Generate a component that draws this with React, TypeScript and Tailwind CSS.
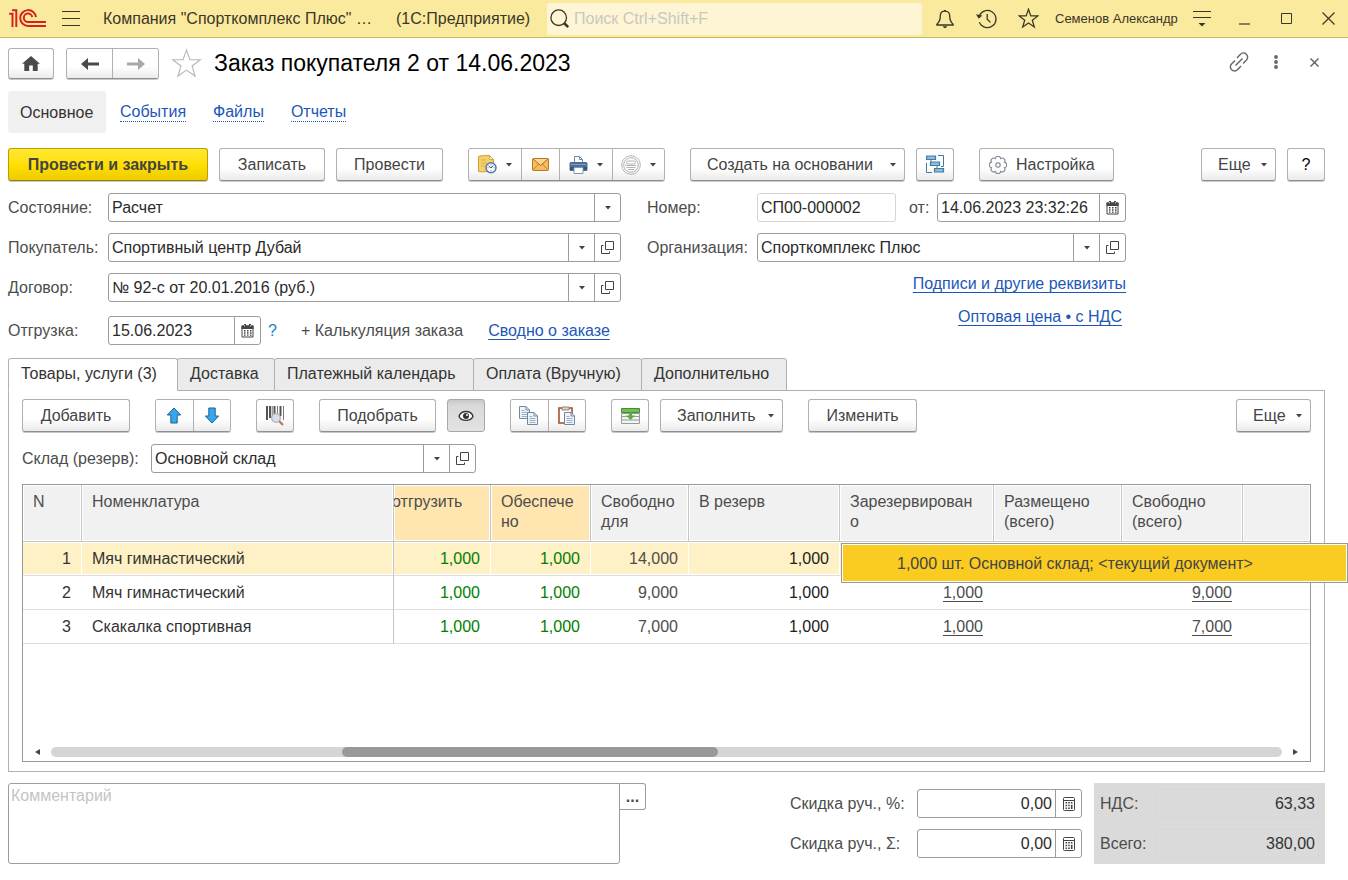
import React from 'react';

/* ─────────────────────────────────────────────
   Small glyphs shared by fields and buttons
───────────────────────────────────────────── */
const Caret: React.FC = () => (
  <svg width="6" height="4" viewBox="0 0 6 4" className="shrink-0" aria-hidden="true">
    <path d="M0 0h6L3 3.6z" fill="#444" />
  </svg>
);

const OpenIcon: React.FC = () => (
  <svg width="13" height="13" viewBox="0 0 13 13" fill="none" stroke="#444" aria-hidden="true">
    <path d="M4.5 .5h8v8h-8z" />
    <path d="M2.5 4.5h-2v8h8v-2" />
  </svg>
);

const CalendarIcon: React.FC = () => (
  <svg width="13" height="14" viewBox="0 0 13 14" aria-hidden="true">
    <path d="M1 2h11v11H1z" fill="#fff" stroke="#444" />
    <path d="M.5 1.5h12V5H.5z" fill="#444" />
    <path d="M3 0h2v3H3zM8 0h2v3H8z" fill="#444" />
    <path d="M3.5 1v1.500M9.500 1v1.500" stroke="#fff" strokeWidth=".6" />
    <path
      d="M3 6h1.500v1.500H3zM6 6h1.500v1.500H6zM9 6h1.500v1.500H9zM3 8.300h1.500v1.500H3zM6 8.300h1.500v1.500H6zM9 8.300h1.500v1.500H9zM3 10.600h1.500v1.200H3zM6 10.600h1.500v1.200H6zM9 10.600h1.500v1.200H9z"
      fill="#444"
    />
  </svg>
);

const CalcIcon: React.FC = () => (
  <svg width="12" height="14" viewBox="0 0 12 14" aria-hidden="true">
    <rect x=".5" y=".5" width="11" height="13" rx="1" fill="#fff" stroke="#444" />
    <path d="M1 3.500h10" stroke="#444" />
    <path
      d="M2.500 5h1.600v1.600H2.500zM5.200 5h1.600v1.600H5.200zM7.900 5h1.600v1.600H7.900zM2.500 7.700h1.600v1.600H2.500zM5.200 7.700h1.600v1.600H5.200zM7.900 7.700h1.600v4.300H7.900zM2.500 10.400h1.600V12H2.500zM5.200 10.400h1.600V12H5.200z"
      fill="#444"
    />
  </svg>
);

/* ─────────────────────────────────────────────
   Title bar icons
───────────────────────────────────────────── */
const Logo: React.FC = () => (
  <svg width="38" height="19" viewBox="0 0 38 19" fill="none" stroke="#d8201f" strokeWidth="2" aria-label="1С">
    <path d="M.2 4.800h3.300V18M3 1.300h4.300V18" />
    <path d="M27 8.200A7.900 7.900 0 1 0 19.300 16.900H37" />
    <path d="M23.200 8.200A4.200 4.200 0 1 0 19.300 12.900H37" />
  </svg>
);

const BellIcon: React.FC = () => (
  <svg width="18" height="20" viewBox="0 0 18 20" fill="none" stroke="#3a3728" strokeWidth="1.300" aria-hidden="true">
    <path d="M9 2.200c-3.200 0-4.700 2-4.700 4.800 0 4.200-1.300 6.500-3.400 8.300v.7h16.200v-.7c-2.100-1.800-3.400-4.100-3.400-8.300 0-2.800-1.500-4.800-4.700-4.800z" />
    <path d="M8 1.700h2" />
    <path d="M6.500 17.200h5L9.800 19H8.200z" fill="#3a3728" stroke="none" />
  </svg>
);

const HistoryIcon: React.FC = () => (
  <svg width="21" height="20" viewBox="0 0 21 20" fill="none" stroke="#3a3728" strokeWidth="1.300" aria-hidden="true">
    <path d="M3 8a8.600 8.600 0 1 1 .4 5.300" />
    <path d="M11.200 5v5.200l3.200 3.200" />
    <path d="M0 5.200l6.300 1.200-3.600 3.400z" fill="#3a3728" stroke="none" />
  </svg>
);

const StarShape: React.FC<{ size: number; color: string; width: number }> = ({ size, color, width }) => (
  <svg width={size} height={size} viewBox="0 0 30 30" fill="none" stroke={color} strokeWidth={width} aria-hidden="true">
    <path d="M15 1.800l3.300 9.400 10 .2-7.900 6 2.900 9.700L15 21.400l-8.300 5.700 2.900-9.700-7.900-6 10-.2z" />
  </svg>
);

/* ─────────────────────────────────────────────
   Command icons
───────────────────────────────────────────── */
const DocClockIcon: React.FC = () => (
  <svg width="19" height="19" viewBox="0 0 19 19" aria-hidden="true">
    <path d="M.5 1.500C3 .2 8 .8 11.500.500L15.500 4.500V16.500C10 16 5 17.500.5 16.500z" fill="#f4d26b" stroke="#cf9f34" />
    <path d="M11.500.5v4h4z" fill="#fdf0bd" stroke="#cf9f34" strokeWidth=".8" />
    <path d="M3 5h5M3 8h6M3 11h4" stroke="#dcb148" />
    <circle cx="13" cy="12.800" r="5" fill="#fff" stroke="#4a7ab0" strokeWidth="1.500" />
    <path d="M13 9.300v1M13 15.300v1M9.500 12.800h1M15.500 12.800h1" stroke="#4a7ab0" />
    <path d="M13 13l-2.500-2.200" stroke="#c33" />
    <path d="M13 13l2.200-2.500" stroke="#345" />
  </svg>
);

const MailIcon: React.FC = () => (
  <svg width="17" height="13" viewBox="0 0 17 13" aria-hidden="true">
    <rect x=".5" y=".5" width="16" height="12" rx="1" fill="#f6bd5c" stroke="#b9772a" />
    <path d="M1 12l5.500-6M16 12l-5.500-6" stroke="#c5832e" fill="none" />
    <path d="M1 1l7.500 6.500L16 1" fill="#fbd68e" stroke="#a5661d" />
  </svg>
);

const PrinterIcon: React.FC = () => (
  <svg width="19" height="18" viewBox="0 0 19 18" aria-hidden="true">
    <path d="M5.500 8V.5h5l3 3V8z" fill="#fff" stroke="#6d87a8" />
    <path d="M10.500.5v3h3" fill="none" stroke="#6d87a8" />
    <rect x=".5" y="6" width="18" height="9" rx="1.500" fill="#4a709a" />
    <path d="M1 11h17v3H1z" fill="#34557c" />
    <path d="M2 8.500h15" stroke="#7fa0c6" />
    <path d="M5 11.500h9v6H5z" fill="#fff" stroke="#8797ab" />
  </svg>
);

const StampIcon: React.FC = () => (
  <svg width="20" height="20" viewBox="0 0 20 20" fill="none" stroke="#b3b3b3" aria-hidden="true">
    <circle cx="10" cy="10" r="9.300" />
    <circle cx="10" cy="10" r="7.300" />
    <rect x="5.500" y="6" width="9" height="3" rx="1.500" />
    <path d="M4.500 10.500h11M5.500 12.500h9M7 14.500h6" />
  </svg>
);

const TreeIcon: React.FC = () => (
  <svg width="19" height="19" viewBox="0 0 19 19" fill="#8fbcd9" stroke="#3f7ca5" aria-hidden="true">
    <path d="M.5 1h9v3.500h-9zM4.500 7h9v3.500h-9zM8.500 13.500h9V17h-9z" strokeWidth="1.200" />
    <path d="M12 .5h5.500v11H15M.5 8v9.500H6M5 4.500V7M11 10.500v3" fill="none" />
  </svg>
);

/* eight petals around the centre */
const GearIcon: React.FC = () => (
  <svg width="18" height="18" viewBox="0 0 18 18" fill="none" stroke="#7c8494" strokeWidth="1.100" aria-hidden="true">
    <path d="M6.300 2.500a2.750 2.750 0 0 1 5.400 0a2.750 2.750 0 0 1 3.800 3.800a2.750 2.750 0 0 1 0 5.400a2.750 2.750 0 0 1-3.800 3.800a2.750 2.750 0 0 1-5.400 0a2.750 2.750 0 0 1-3.800-3.800a2.750 2.750 0 0 1 0-5.400a2.750 2.750 0 0 1 3.800-3.800z" />
    <circle cx="9" cy="9" r="2.200" />
  </svg>
);

const BlueArrow: React.FC<{ down?: boolean }> = ({ down }) => (
  <svg width="16" height="17" viewBox="0 0 16 17" className={down ? 'rotate-180' : ''} aria-hidden="true">
    <path d="M8 1l6.700 7h-3.500v8H4.800V8H1.300z" fill="#3aa5ea" stroke="#17649c" strokeLinejoin="round" />
  </svg>
);

const BarcodeIcon: React.FC = () => (
  <svg width="19" height="20" viewBox="0 0 19 20" aria-hidden="true">
    <path d="M1 0v14M4 0v12M8.500 0v8M14.500 0v10" stroke="#555" strokeWidth="2" />
    <path d="M6.200 0v12M11.500 0v8M17.500 0v14" stroke="#777" />
    <path d="M13 15l4 4" stroke="#b08068" strokeWidth="2.400" />
    <circle cx="10" cy="12" r="4.300" fill="#cfe2f5" stroke="#c9a793" strokeWidth="1.300" />
  </svg>
);

const EyeIcon: React.FC = () => (
  <svg width="16" height="12" viewBox="0 0 16 12" aria-hidden="true">
    <path d="M1 6.200C3.500 0 12.500 0 15 6.200 12.500 11.800 3.500 11.800 1 6.200z" fill="#fff" stroke="#333" strokeWidth="1.400" />
    <circle cx="8" cy="6" r="3" fill="#333" />
    <circle cx="9" cy="5" r="1" fill="#fff" />
  </svg>
);

const SheetPath: React.FC<{ x: number; y: number }> = ({ x, y }) => (
  <g transform={`translate(${x} ${y})`}>
    <path d="M.5.5h6.500l3.500 3.500v8.500H.5z" fill="#eef4fa" stroke="#73879f" />
    <path d="M7 .5V4h3.500" fill="none" stroke="#73879f" />
    <path d="M2.500 4.500h3M2.500 6.500h6M2.500 8.500h6M2.500 10.500h6" stroke="#9db0c5" />
  </g>
);

const CopyIcon: React.FC = () => (
  <svg width="20" height="20" viewBox="0 0 20 20" aria-hidden="true">
    <SheetPath x={0} y={0} />
    <SheetPath x={8} y={6} />
  </svg>
);

const PasteIcon: React.FC = () => (
  <svg width="18" height="20" viewBox="0 0 18 20" aria-hidden="true">
    <rect x="1" y="2" width="13" height="15" fill="#fff" stroke="#a5552b" strokeWidth="1.600" />
    <path d="M4 1h7v3H4z" fill="#d9d4cf" stroke="#94877b" />
    <SheetPath x={6} y={6} />
  </svg>
);

const FillRowsIcon: React.FC = () => (
  <svg width="19" height="16" viewBox="0 0 19 16" aria-hidden="true">
    <path d="M.5 5.500h18v10H.5z" fill="#f3f3f3" stroke="#999" />
    <path d="M1 8.500h17M1 12h17" stroke="#999" />
    <path d="M.5.500h18v4H.5z" fill="#72bd58" stroke="#428d30" />
    <path d="M8 4.500h3v3h3l-4.500 4.500L5 7.500h3z" fill="#59ad41" />
  </svg>
);

/* ─────────────────────────────────────────────
   Buttons
───────────────────────────────────────────── */
interface BtnProps {
  children: React.ReactNode;
  label?: string;
  className?: string;
}

const FACE =
  'flex items-center justify-center whitespace-nowrap bg-linear-to-b from-white from-60% to-[#ebebeb] text-[#444]';
const FRAME = 'rounded-[3px] border border-[#b0b0b0] border-b-[#8f8f8f] shadow-[0_1px_0_#c8c8c8]';

const Btn: React.FC<BtnProps> = ({ children, label, className = '' }) => (
  <button type="button" aria-label={label} className={`h-[33px] shrink-0 gap-[9px] ${FACE} ${FRAME} ${className}`}>
    {children}
  </button>
);

/* text button with a drop-down caret at its right edge */
const MenuBtn: React.FC<BtnProps> = ({ children, className = '' }) => (
  <Btn className={`pr-2 pl-4 ${className}`}>
    <span className="flex-1 text-left">{children}</span>
    <Caret />
  </Btn>
);

/* several buttons that share one frame */
const BtnGroup: React.FC<{ children: React.ReactNode; className?: string }> = ({ children, className = '' }) => (
  <div className={`flex shrink-0 overflow-hidden divide-x divide-[#b0b0b0] ${FRAME} ${className}`}>{children}</div>
);

const GroupBtn: React.FC<BtnProps> = ({ children, label, className = '' }) => (
  <button type="button" aria-label={label} className={`gap-[9px] ${FACE} ${className}`}>
    {children}
  </button>
);

/* ─────────────────────────────────────────────
   Form fields
───────────────────────────────────────────── */
const BOX = 'flex h-[29px] min-w-0 rounded-[3px] border border-[#9c9c9c] bg-white text-[#2b2b2b]';
const SIDE = 'flex w-[26px] shrink-0 items-center justify-center border-l border-[#9c9c9c]';

interface FieldProps {
  id: string;
  value: string;
  open?: boolean;
  className?: string;
}

const SelectField: React.FC<FieldProps> = ({ id, value, open, className = 'flex-1' }) => (
  <div className={`${BOX} ${className}`}>
    <div className="relative min-w-0 flex-1">
      <select id={id} className="h-full w-full appearance-none bg-transparent pr-8 pl-[3px] outline-none">
        <option>{value}</option>
      </select>
      <span className={`pointer-events-none absolute inset-y-0 right-0 ${SIDE}`}>
        <Caret />
      </span>
    </div>
    {open && (
      <button type="button" aria-label="Открыть" className={SIDE}>
        <OpenIcon />
      </button>
    )}
  </div>
);

interface PickFieldProps extends FieldProps {
  icon: React.ReactNode;
  hint: string;
  inputClass?: string;
}

const PickField: React.FC<PickFieldProps> = ({ id, value, icon, hint, className = '', inputClass = 'px-[3px]' }) => (
  <div className={`${BOX} ${className}`}>
    <input id={id} defaultValue={value} className={`min-w-0 flex-1 bg-transparent outline-none ${inputClass}`} />
    <button type="button" aria-label={hint} className={SIDE}>
      {icon}
    </button>
  </div>
);

const Label: React.FC<{ htmlFor: string; className?: string; children: React.ReactNode }> = ({
  htmlFor,
  className = 'w-[100px]',
  children,
}) => (
  <label htmlFor={htmlFor} className={`shrink-0 whitespace-nowrap ${className}`}>
    {children}
  </label>
);

const LINK = 'text-[#1c57b8] underline decoration-1 underline-offset-[3px]';

/* ─────────────────────────────────────────────
   Title bar
───────────────────────────────────────────── */
const TitleBar: React.FC = () => (
  <header className="flex h-[38px] items-center border-b border-[#c9b860] bg-[#faea9d] text-[#3a3728]">
    <div className="flex w-[547px] shrink-0 items-center pl-[9px] whitespace-nowrap">
      <Logo />
      <button type="button" aria-label="Главное меню" className="ml-[15px] flex w-[18px] flex-col gap-[6px]">
        <span className="h-px bg-[#3a3728]" />
        <span className="h-px bg-[#3a3728]" />
        <span className="h-px bg-[#3a3728]" />
      </button>
      <span className="ml-[23px] w-[293px]">Компания "Спорткомплекс Плюс" …</span>
      <span>(1С:Предприятие)</span>
    </div>
    <label className="flex h-8 min-w-0 flex-1 items-center gap-1 rounded-[2px] bg-[#fdf5d4] pl-[3px]">
      <svg width="20" height="20" viewBox="0 0 20 20" fill="none" stroke="#3a3728" aria-hidden="true">
        <circle cx="8.700" cy="8.700" r="7.800" strokeWidth="1.300" />
        <path d="M14 14l4.200 4.200" strokeWidth="2.600" />
      </svg>
      <input
        type="search"
        aria-label="Поиск"
        placeholder="Поиск Ctrl+Shift+F"
        className="min-w-0 flex-1 bg-transparent outline-none placeholder:text-[#c9c7c1]"
      />
    </label>
    <div className="flex w-[426px] shrink-0 items-center pl-[14px]">
      <button type="button" aria-label="Уведомления">
        <BellIcon />
      </button>
      <button type="button" aria-label="История" className="ml-[22px]">
        <HistoryIcon />
      </button>
      <button type="button" aria-label="Избранное" className="ml-[21px]">
        <StarShape size={21} color="#3a3728" width={1.8} />
      </button>
      <span className="ml-4 w-[138px] text-[13px] whitespace-nowrap">Семенов Александр</span>
      <button type="button" aria-label="Настройки панели">
        <svg width="18" height="17" viewBox="0 0 18 17" aria-hidden="true">
          <path d="M0 1.500h18M0 7.500h18" stroke="#3a3728" strokeWidth="1.200" />
          <path d="M5.500 13h7L9 16.500z" fill="#3a3728" />
        </svg>
      </button>
      <button type="button" aria-label="Свернуть" className="ml-7">
        <svg width="11" height="12" viewBox="0 0 11 12" aria-hidden="true">
          <path d="M0 11h11" stroke="#3a3728" strokeWidth="1.200" />
        </svg>
      </button>
      <button type="button" aria-label="Развернуть" className="ml-[31px]">
        <svg width="11" height="11" viewBox="0 0 11 11" aria-hidden="true">
          <path d="M.5.5h10v10H.5z" fill="none" stroke="#3a3728" />
        </svg>
      </button>
      <button type="button" aria-label="Закрыть программу" className="ml-[30px]">
        <svg width="13" height="13" viewBox="0 0 13 13" aria-hidden="true">
          <path d="M.5.5l12 12M12.500.500l-12 12" stroke="#3a3728" strokeWidth="1.200" />
        </svg>
      </button>
    </div>
  </header>
);

/* ─────────────────────────────────────────────
   Document heading with navigation
───────────────────────────────────────────── */
const NavArrow: React.FC<{ color: string; flip?: boolean }> = ({ color, flip }) => (
  <svg width="18" height="12" viewBox="0 0 18 12" className={flip ? 'rotate-180' : ''} aria-hidden="true">
    <path d="M0 6l7-6v4.500h11v3H7V12z" fill={color} />
  </svg>
);

const Heading: React.FC = () => (
  <div className="flex items-center pt-[10px]">
    <button type="button" aria-label="Домой" className={`h-[31px] w-[46px] shrink-0 ${FACE} ${FRAME}`}>
      <svg width="18" height="15" viewBox="0 0 18 15" fill="#4a4a4a" aria-hidden="true">
        <path d="M9 0l9 7.800h-2.300V15h-4.900V9.500H7.200V15H2.300V7.800H0z" />
      </svg>
    </button>
    <BtnGroup className="ml-3 h-[31px] w-[93px]">
      <GroupBtn label="Назад" className="flex-1">
        <NavArrow color="#4a4a4a" />
      </GroupBtn>
      <GroupBtn label="Вперед" className="flex-1">
        <NavArrow color="#a8a8a8" flip />
      </GroupBtn>
    </BtnGroup>
    <button type="button" aria-label="В избранное" className="ml-3">
      <StarShape size={31} color="#b4b8bc" width={1.1} />
    </button>
    <h1 className="ml-3 flex-1 pb-[2px] text-[23px] leading-7 text-black">Заказ покупателя 2 от 14.06.2023</h1>
    <div className="flex items-center pr-[6px] pb-[3px]">
      <button type="button" aria-label="Получить ссылку">
        <svg width="20" height="20" viewBox="0 0 20 20" fill="none" stroke="#666" strokeWidth="1.400" aria-hidden="true">
          <path d="M8 6l3.500-3.700a4.100 4.100 0 0 1 6 5.700L14 11.500M12 14l-3.500 3.700a4.100 4.100 0 0 1-6-5.700L6 8.500" />
          <path d="M6.500 13.500l7-7" />
        </svg>
      </button>
      <button type="button" aria-label="Дополнительные действия" className="ml-[25px]">
        <svg width="4" height="14" viewBox="0 0 4 14" fill="#666" aria-hidden="true">
          <circle cx="2" cy="2" r="1.900" />
          <circle cx="2" cy="7" r="1.900" />
          <circle cx="2" cy="12" r="1.900" />
        </svg>
      </button>
      <button type="button" aria-label="Закрыть" className="ml-8">
        <svg width="9" height="9" viewBox="0 0 9 9" stroke="#666" strokeWidth="1.500" aria-hidden="true">
          <path d="M.5.5l8 8M8.500.500l-8 8" />
        </svg>
      </button>
    </div>
  </div>
);

const SectionNav: React.FC = () => (
  <nav className="mt-3 flex items-center">
    <span className="w-[98px] rounded-[3px] bg-[#f0f0f0] px-3 pt-[10px] pb-2 leading-6 text-[#333]">Основное</span>
    {['События', 'Файлы', 'Отчеты'].map((name, i) => (
      <a
        key={name}
        href="#"
        className={`${i === 0 ? 'ml-[14px]' : 'ml-[27px]'} border-b border-dotted border-[#1c57b8] pt-px leading-[18px] text-[#1c57b8]`}
      >
        {name}
      </a>
    ))}
  </nav>
);

/* ─────────────────────────────────────────────
   Document commands
───────────────────────────────────────────── */
const CommandBar: React.FC = () => (
  <div className="mt-[15px] flex items-center gap-[11px]">
    <button
      type="button"
      className="h-[33px] w-[200px] shrink-0 rounded-[3px] border border-[#b8a000] border-b-[#958200] bg-linear-to-b from-[#ffe631] via-[#ffe000] to-[#eecb00] font-bold whitespace-nowrap text-[#444] shadow-[0_1px_0_#c8c8c8]"
    >
      Провести и закрыть
    </button>
    <Btn className="w-[106px]">Записать</Btn>
    <Btn className="w-[107px]">Провести</Btn>
    <BtnGroup className="ml-[14px] h-[33px]">
      <GroupBtn label="Отложенная запись" className="w-[53px]">
        <DocClockIcon />
        <Caret />
      </GroupBtn>
      <GroupBtn label="Отправить по почте" className="w-[38px]">
        <MailIcon />
      </GroupBtn>
      <GroupBtn label="Печать" className="w-[53px]">
        <PrinterIcon />
        <Caret />
      </GroupBtn>
      <GroupBtn label="Подпись" className="w-[51px]">
        <StampIcon />
        <Caret />
      </GroupBtn>
    </BtnGroup>
    <MenuBtn className="ml-[14px] w-[215px]">Создать на основании</MenuBtn>
    <Btn label="Структура подчиненности" className="w-[38px]">
      <TreeIcon />
    </Btn>
    <Btn className="ml-[14px] w-[135px] pl-[9px]">
      <GearIcon />
      <span className="flex-1 text-left">Настройка</span>
    </Btn>
    <MenuBtn className="ml-auto w-[75px]">Еще</MenuBtn>
    <Btn className="w-[38px] text-black">?</Btn>
  </div>
);

/* ─────────────────────────────────────────────
   Document attributes
───────────────────────────────────────────── */
const DocumentForm: React.FC = () => (
  <div className="mt-3 grid grid-cols-[minmax(0,613fr)_minmax(0,479fr)] gap-x-[26px] pr-[199px]">
    <div className="flex flex-col gap-[11px]">
      <div className="flex items-center">
        <Label htmlFor="state">Состояние:</Label>
        <SelectField id="state" value="Расчет" />
      </div>
      <div className="flex items-center">
        <Label htmlFor="customer">Покупатель:</Label>
        <SelectField id="customer" value="Спортивный центр Дубай" open />
      </div>
      <div className="flex items-center">
        <Label htmlFor="contract">Договор:</Label>
        <SelectField id="contract" value="№ 92-с от 20.01.2016 (руб.)" open />
      </div>
      <div className="mt-[3px] flex items-center whitespace-nowrap">
        <Label htmlFor="shipment">Отгрузка:</Label>
        <PickField
          id="shipment"
          value="15.06.2023"
          icon={<CalendarIcon />}
          hint="Выбрать дату"
          className="w-[153px] shrink-0"
        />
        <button type="button" className="ml-[7px] text-[#1b7fc4]">
          ?
        </button>
        <button type="button" className="ml-6">
          + Калькуляция заказа
        </button>
        <a href="#" className={`ml-[25px] ${LINK}`}>
          Сводно о заказе
        </a>
      </div>
    </div>

    <div className="flex flex-col gap-[11px]">
      <div className="flex items-center">
        <Label htmlFor="number" className="w-[110px]">
          Номер:
        </Label>
        <input
          id="number"
          readOnly
          value="СП00-000002"
          className="h-[29px] w-[139px] min-w-0 rounded-[3px] border border-[#d5d5d5] px-[3px] text-[#2b2b2b] outline-none"
        />
        <Label htmlFor="date" className="ml-[13px] w-7">
          от:
        </Label>
        <PickField
          id="date"
          value="14.06.2023 23:32:26"
          icon={<CalendarIcon />}
          hint="Выбрать дату"
          className="flex-1"
        />
      </div>
      <div className="flex items-center">
        <Label htmlFor="company" className="w-[110px]">
          Организация:
        </Label>
        <SelectField id="company" value="Спорткомплекс Плюс" open />
      </div>
      <div className="flex flex-col items-end gap-[11px] leading-[22px]">
        <a href="#" className={LINK}>
          Подписи и другие реквизиты
        </a>
        <a href="#" className={`mr-1 ${LINK}`}>
          Оптовая цена • с НДС
        </a>
      </div>
    </div>
  </div>
);

/* ─────────────────────────────────────────────
   Goods table
───────────────────────────────────────────── */
interface Row {
  n: number;
  name: string;
  ship: string;
  provided: string;
  free: string;
  toReserve: string;
  reserved: string;
  freeTotal: string;
}

const rows: Row[] = [
  {
    n: 1,
    name: 'Мяч гимнастический',
    ship: '1,000',
    provided: '1,000',
    free: '14,000',
    toReserve: '1,000',
    reserved: '',
    freeTotal: '',
  },
  {
    n: 2,
    name: 'Мяч гимнастический',
    ship: '1,000',
    provided: '1,000',
    free: '9,000',
    toReserve: '1,000',
    reserved: '1,000',
    freeTotal: '9,000',
  },
  {
    n: 3,
    name: 'Скакалка спортивная',
    ship: '1,000',
    provided: '1,000',
    free: '7,000',
    toReserve: '1,000',
    reserved: '1,000',
    freeTotal: '7,000',
  },
];

interface ThProps {
  children?: React.ReactNode;
  className?: string;
}

const Th: React.FC<ThProps> = ({ children, className = 'bg-[#f1f1f1]' }) => (
  <th
    className={`h-[57px] border-r border-b border-[#c6c6c6] px-[10px] pt-[7px] text-left align-top leading-5 font-normal shadow-[inset_0_0_0_1px_#fff] last:border-r-0 ${className}`}
  >
    {children}
  </th>
);

const GoodsTable: React.FC = () => (
  <table className="w-full table-fixed border-separate border-spacing-0">
    <colgroup>
      <col className="w-[59px]" />
      <col className="w-[312px]" />
      <col className="w-[97px]" />
      <col className="w-[100px]" />
      <col className="w-[98px]" />
      <col className="w-[151px]" />
      <col className="w-[154px]" />
      <col className="w-[128px]" />
      <col className="w-[121px]" />
      <col />
    </colgroup>
    <thead>
      <tr>
        <Th>N</Th>
        <Th>Номенклатура</Th>
        <Th className="overflow-hidden bg-[#ffe6b0]">
          <span className="-ml-3 block">отгрузить</span>
        </Th>
        <Th className="bg-[#ffe6b0]">
          Обеспече
          <br />
          но
        </Th>
        <Th>
          Свободно
          <br />
          для
        </Th>
        <Th>В резерв</Th>
        <Th>
          Зарезервирован
          <br />о
        </Th>
        <Th>
          Размещено
          <br />
          (всего)
        </Th>
        <Th>
          Свободно
          <br />
          (всего)
        </Th>
        <Th />
      </tr>
    </thead>
    <tbody>
      {rows.map((row) => {
        const selected = row.n === 1;
        const cell = `h-[34px] border-b border-[#dedede] pr-[11px] pl-[10px] ${
          selected ? 'bg-[#fef1c5] shadow-[inset_0_1px_0_#fff,inset_-1px_-1px_0_#fff]' : ''
        }`;
        return (
          <tr key={row.n} className="text-right">
            <td className={`${cell} text-[#333]`}>{row.n}</td>
            <td className={`${cell} border-r border-r-[#c6c6c6] text-left text-[#333]`}>{row.name}</td>
            <td className={`${cell} text-[#008000]`}>{row.ship}</td>
            <td className={`${cell} text-[#008000]`}>{row.provided}</td>
            <td className={cell}>{row.free}</td>
            <td className={`${cell} text-[#222]`}>{row.toReserve}</td>
            <td className={`${cell} relative`}>
              <span className="underline underline-offset-[3px]">{row.reserved}</span>
              {selected && (
                <div
                  role="tooltip"
                  className="absolute top-px left-px z-10 w-[507px] border border-[#999] bg-white p-px text-left whitespace-nowrap text-[#444]"
                >
                  <div className="bg-[#facb20] pt-[7px] pb-[5px] pl-[54px] leading-6">
                    1,000 шт. Основной склад; &lt;текущий документ&gt;
                  </div>
                </div>
              )}
            </td>
            <td className={cell} />
            <td className={cell}>
              <span className="underline underline-offset-[3px]">{row.freeTotal}</span>
            </td>
            <td className={cell} />
          </tr>
        );
      })}
    </tbody>
  </table>
);

const ScrollStrip: React.FC = () => (
  <div className="flex items-center gap-[11px] px-3 pb-1">
    <svg width="5" height="6" viewBox="0 0 5 6" aria-hidden="true">
      <path d="M5 0v6L0 3z" fill="#444" />
    </svg>
    <div className="h-[10px] flex-1 rounded-full bg-[#d5d5d5]">
      <div className="ml-[23.6%] h-full w-[30.6%] rounded-full bg-[#999]" />
    </div>
    <svg width="5" height="6" viewBox="0 0 5 6" aria-hidden="true">
      <path d="M0 0v6l5-3z" fill="#444" />
    </svg>
  </div>
);

/* ─────────────────────────────────────────────
   Tabs and the goods panel
───────────────────────────────────────────── */
const tabs = [
  { title: 'Товары, услуги (3)', width: 'w-[170px]' },
  { title: 'Доставка', width: 'w-[98px]' },
  { title: 'Платежный календарь', width: 'w-[200px]' },
  { title: 'Оплата (Вручную)', width: 'w-[169px]' },
  { title: 'Дополнительно', width: 'w-[146px]' },
];

const GoodsPanel: React.FC = () => (
  <section className="mt-[13px]">
    <div role="tablist" className="flex">
      {tabs.map((tab, i) => (
        <button
          key={tab.title}
          type="button"
          role="tab"
          aria-selected={i === 0}
          className={`relative -mb-px h-[33px] rounded-t-[3px] border border-[#b0b0b0] px-3 pb-[2px] text-left whitespace-nowrap text-[#333] ${tab.width} ${
            i === 0 ? 'border-b-white bg-white' : '-ml-px bg-[#ebebeb]'
          }`}
        >
          {tab.title}
        </button>
      ))}
    </div>

    <div className="border border-[#b0b0b0] px-[13px] pt-2 pb-[9px]">
      <div className="flex items-center gap-[11px]">
        <Btn className="w-[108px]">Добавить</Btn>
        <BtnGroup className="ml-[14px] h-[33px] w-[76px]">
          <GroupBtn label="Переместить вверх" className="flex-1">
            <BlueArrow />
          </GroupBtn>
          <GroupBtn label="Переместить вниз" className="flex-1">
            <BlueArrow down />
          </GroupBtn>
        </BtnGroup>
        <Btn label="Поиск по штрихкоду" className="ml-[14px] w-[38px]">
          <BarcodeIcon />
        </Btn>
        <Btn className="ml-[14px] w-[117px]">Подобрать</Btn>
        <button
          type="button"
          aria-label="Показать остатки"
          aria-pressed="true"
          className="flex h-[33px] w-[38px] shrink-0 items-center justify-center rounded-[3px] border border-[#a8a8a8] bg-linear-to-b from-[#c8c8c8] from-0% via-[#dadada] via-20% to-[#e2e2e2]"
        >
          <EyeIcon />
        </button>
        <BtnGroup className="ml-[14px] h-[33px] w-[76px]">
          <GroupBtn label="Копировать строки" className="flex-1">
            <CopyIcon />
          </GroupBtn>
          <GroupBtn label="Вставить строки" className="flex-1">
            <PasteIcon />
          </GroupBtn>
        </BtnGroup>
        <Btn label="Загрузить из файла" className="ml-[14px] w-[38px]">
          <FillRowsIcon />
        </Btn>
        <MenuBtn className="w-[123px]">Заполнить</MenuBtn>
        <Btn className="ml-[14px] w-[109px]">Изменить</Btn>
        <MenuBtn className="ml-auto w-[75px]">Еще</MenuBtn>
      </div>

      <div className="mt-3 flex items-center">
        <Label htmlFor="warehouse" className="w-[129px]">
          Склад (резерв):
        </Label>
        <SelectField id="warehouse" value="Основной склад" open className="w-[325px]" />
      </div>

      <div className="mt-[11px] flex min-h-[278px] flex-col justify-between border border-[#999]">
        <GoodsTable />
        <ScrollStrip />
      </div>
    </div>
  </section>
);

/* ─────────────────────────────────────────────
   Comment, discounts and totals
───────────────────────────────────────────── */
const TotalLine: React.FC<{ id: string; label: string; value: string }> = ({ id, label, value }) => (
  <div className="flex items-center">
    <Label htmlFor={id} className="w-[55px]">
      {label}
    </Label>
    <input
      id={id}
      readOnly
      value={value}
      className="h-[29px] min-w-0 flex-1 rounded-[3px] border border-[#d6d6d6] bg-transparent px-[3px] text-right text-[#333] outline-none"
    />
  </div>
);

const Footer: React.FC = () => (
  <footer className="mt-[11px] flex items-start">
    <div className="flex min-w-0 flex-1 items-start">
      <textarea
        aria-label="Комментарий"
        placeholder="Комментарий"
        className="h-[81px] min-w-0 flex-1 resize-none rounded-[3px] rounded-tr-none border border-[#9c9c9c] px-[2px] leading-6 outline-none placeholder:text-[#c4c4c4]"
      />
      <button
        type="button"
        aria-label="Открыть комментарий"
        className="h-[27px] w-[26px] shrink-0 rounded-r-[3px] border border-l-0 border-[#9c9c9c] font-bold"
      >
        ...
      </button>
    </div>
    <div className="ml-36 flex w-[292px] shrink-0 flex-col gap-[11px] pt-[6px]">
      <div className="flex items-center">
        <Label htmlFor="discount-percent" className="w-[127px]">
          Скидка руч., %:
        </Label>
        <PickField
          id="discount-percent"
          value="0,00"
          icon={<CalcIcon />}
          hint="Калькулятор"
          className="flex-1"
          inputClass="px-[3px] text-right"
        />
      </div>
      <div className="flex items-center">
        <Label htmlFor="discount-sum" className="w-[127px]">
          Скидка руч., Σ:
        </Label>
        <PickField
          id="discount-sum"
          value="0,00"
          icon={<CalcIcon />}
          hint="Калькулятор"
          className="flex-1"
          inputClass="px-[3px] text-right"
        />
      </div>
    </div>
    <div className="ml-3 flex w-[231px] shrink-0 flex-col gap-[11px] bg-[#dadada] px-[6px] py-[6px]">
      <TotalLine id="vat" label="НДС:" value="63,33" />
      <TotalLine id="total" label="Всего:" value="380,00" />
    </div>
  </footer>
);

const App: React.FC = () => (
  <div className="min-h-screen bg-white font-['Liberation_Sans',Arial,sans-serif] text-base text-[#4d4d4d]">
    <TitleBar />
    <main className="pr-[23px] pb-4 pl-2">
      <Heading />
      <SectionNav />
      <CommandBar />
      <DocumentForm />
      <GoodsPanel />
      <Footer />
    </main>
  </div>
);

export default App;
